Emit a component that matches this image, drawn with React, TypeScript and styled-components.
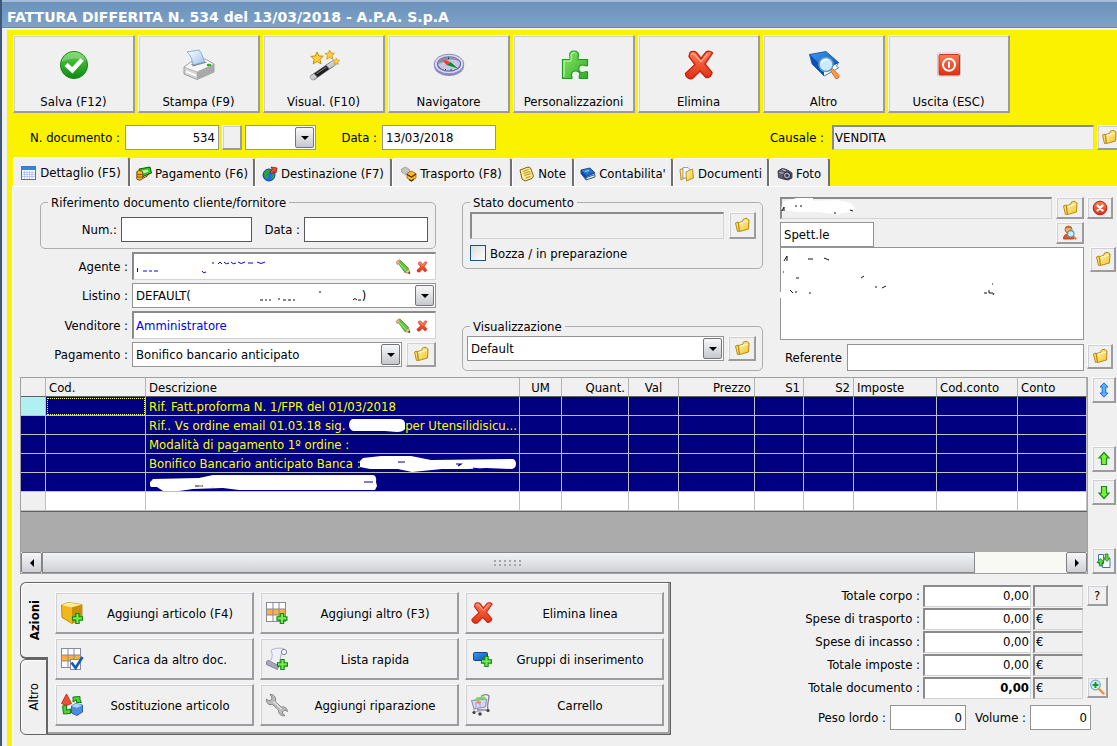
import React from 'react';
import styled, { createGlobalStyle, css } from 'styled-components';

const GlobalStyle = createGlobalStyle`
  *, *::before, *::after { box-sizing: border-box; }
  body { margin: 0; background: #f0f0f0; }
  body, button, input, select, textarea {
    font-family: 'DejaVu Sans Condensed', 'DejaVu Sans', sans-serif;
    font-size: 13px;
    line-height: 15px;
    color: #000;
  }
  svg { display: block; flex: none; }
`;

/* ---------- icons ---------- */

type IconProps = { size?: number };

const Svg = ({ size = 16, box = 16, children }: { size?: number; box?: number; children: React.ReactNode }) => (
  <svg width={size} height={size} viewBox={`0 0 ${box} ${box}`} aria-hidden="true">{children}</svg>
);

const GradientSheet = styled.svg`
  position: absolute;
`;
const Gradients = () => (
  <GradientSheet width="0" height="0" aria-hidden="true">
    <defs>
      <linearGradient id="green" x1="0" y1="0" x2="0" y2="1"><stop offset="0" stopColor="#5fd048" /><stop offset="1" stopColor="#0d8a14" /></linearGradient>
      <linearGradient id="lime" x1="0" y1="0" x2="1" y2="1"><stop offset="0" stopColor="#8be868" /><stop offset="1" stopColor="#2fae22" /></linearGradient>
      <linearGradient id="red" x1="0" y1="0" x2="0" y2="1"><stop offset="0" stopColor="#ff7a55" /><stop offset="1" stopColor="#e22e10" /></linearGradient>
      <linearGradient id="gold" x1="0" y1="0" x2="1" y2="1"><stop offset="0" stopColor="#fff6b0" /><stop offset="1" stopColor="#f2c428" /></linearGradient>
      <linearGradient id="blue" x1="0" y1="0" x2="1" y2="1"><stop offset="0" stopColor="#3f9cf0" /><stop offset="1" stopColor="#0a4cb4" /></linearGradient>
      <linearGradient id="steel" x1="0" y1="0" x2="1" y2="1"><stop offset="0" stopColor="#ffffff" /><stop offset="1" stopColor="#9a9aa8" /></linearGradient>
      <linearGradient id="paper" x1="0" y1="0" x2="1" y2="1"><stop offset="0" stopColor="#ffffff" /><stop offset="1" stopColor="#9cc4f0" /></linearGradient>
    </defs>
  </GradientSheet>
);

const Plus = ({ x, y, s = 1 }: { x: number; y: number; s?: number }) => (
  <path transform={`translate(${x} ${y}) scale(${s})`} d="M4 .5h3.500v3.500H11v3.500H7.500V11H4V7.500H.5V4H4z" fill="#7bea4f" stroke="#0d8a14" strokeWidth="1.200" />
);

const CheckIcon = () => (
  <Svg size={32} box={32}>
    <circle cx="16" cy="16" r="13.600" fill="url(#green)" stroke="#1a8a1a" />
    <path d="M3.500 13C5 6 11 3 16 3s11 3 12.500 9C22 9 12 9 3.500 13z" fill="#fff" opacity=".25" />
    <path d="M6.500 17l3.200-3 4.500 4 8.300-8.700 3.200 2.800L14.500 24.500z" fill="#fff" />
  </Svg>
);
const PrinterIcon = () => (
  <Svg size={32} box={32}>
    <path d="M1 18l7-5 14-3 9 5v8l-17 7.500L1 25z" fill="#d4d4d4" stroke="#8a8a8a" strokeWidth=".8" />
    <path d="M1 18l7-5 14-3 9 5-17 8z" fill="#f6f6f6" stroke="#9a9a9a" strokeWidth=".6" />
    <path d="M8 15l13-3 3 1.500-14 4z" fill="#8c8c8c" />
    <path d="M4 3l12-2c3 3 4 8 5.500 12L10 16C9 11 8 6 4 3z" fill="url(#paper)" stroke="#6d9fce" strokeWidth=".8" />
    <path d="M14 23L31 15.500v7.500l-17 7.500z" fill="#a9a9a9" />
    <path d="M3 21.500l10 4v2L3 23.500z" fill="#fff" />
    <ellipse cx="26" cy="16" rx="2.400" ry="1.300" fill="#2fae22" />
  </Svg>
);
const Star = ({ x, y, s }: { x: number; y: number; s: number }) => (
  <path transform={`translate(${x} ${y}) scale(${s})`} d="M5.500 0l1.600 3.600 4 .2-3 2.800 1 4.100-3.600-2.100L2 10.800l.8-4L0 4l3.900-.3z" fill="#ffd23a" stroke="#c88a08" strokeWidth=".9" />
);
const WandIcon = () => (
  <Svg size={32} box={32}>
    <path d="M3 26.500l19-13 3.500 3.700L6.500 30.500z" fill="#1c1c1c" stroke="#555" strokeWidth=".6" />
    <path d="M2.500 26.800l3.500-2.300 3.500 3.800-3.500 2.500c-2 1-5-2-3.500-4zM18 16.200l8-5.500 3.500 3.800-8 5.500z" fill="url(#steel)" stroke="#777" strokeWidth=".6" />
    <path d="M8 24.500l10-6.800.8.800L8.800 25.200z" fill="#777" />
    <Star x={3} y={3} s={1.100} /><Star x={17} y={1} s={0.850} /><Star x={25} y={9} s={0.600} />
  </Svg>
);
const CompassIcon = () => (
  <Svg size={32} box={32}>
    <ellipse cx="16" cy="17" rx="15" ry="10" fill="#8888c8" />
    <ellipse cx="16" cy="15" rx="14.800" ry="9.800" fill="#d8d8f4" stroke="#8080b8" strokeWidth=".9" />
    <ellipse cx="16" cy="15" rx="11.500" ry="7.200" fill="#c4c8e4" stroke="#6c6c98" strokeWidth="1.200" />
    <path d="M5 15c1-5 7-7 11-7 5 0 9 2 11 5-5-3-10-3-13-1-3 1-6 2-9 3z" fill="#8c90b0" />
    <path d="M9 10.500l8.500 2.500-4 3z" fill="#ff3a20" />
    <path d="M25 19.500l-7.500-6.500-4 3z" fill="#108828" />
    <path d="M15.500 8.500v1.500M13 20l-1 1M18 20v1.500" stroke="#333" />
  </Svg>
);
const PuzzleIcon = () => (
  <Svg size={32} box={32}>
    <path d="M4.500 10.500h7c1.500-1 .2-2.500.2-4.500C11.700 3 13.700 2 16 2s4.500 1.200 4.500 4c0 2-1.500 3.500 0 4.500h9v6c-1.500 1-3-.5-5-.5-2.600 0-3.700 1.500-3.700 3.700s1.500 3.800 3.700 3.800c2 0 3.500-1.500 5-.5v6.500h-8c-1-1.500.3-2.500.3-4 0-2.300-1.800-3.500-4.300-3.500S13.500 23.700 13.500 26c0 1.500 1.200 2 .2 3.500H4.500z" fill="url(#lime)" stroke="#1f9a20" strokeWidth="1.200" />
    <path d="M6 28V12h6.500c1.500-2 .5-4 .5-6 .2-2 2-2.700 4-2.500" fill="none" stroke="#c6f8b0" strokeWidth="1.100" />
  </Svg>
);
const CrossIcon = ({ size = 32 }: IconProps) => (
  <Svg size={size} box={32}>
    <path d="M7 3.500c1.500-1.500 5-1.500 6.500 0L18 9.500l5-6.500c2-1.500 5.500-.5 6.500 1l-7.500 11 7 8.500c.5 2.500-3 5.500-6 5L17 22l-7 7c-2 1.500-5.500.5-7-2l-.5-2.500L12 15.500 6 7.500z" fill="url(#red)" stroke="#c42410" strokeWidth="1.400" />
    <path d="M8 5.500c1.500-1 3-.8 4 .3l6 7 6.500-8" fill="none" stroke="#ffb49a" strokeWidth="1.200" />
  </Svg>
);
const BookSearchIcon = () => (
  <Svg size={32} box={32}>
    <path d="M1.500 5.500L4 15l12 12 14.500-8-2-2 2-3.500L16 21z" fill="#fff" stroke="#1560c0" strokeWidth=".8" />
    <path d="M1.500 5.500L18 2.500l12.500 11L16 20z" fill="url(#blue)" stroke="#0c48a0" strokeWidth=".8" />
    <path d="M1.500 5.500L4 15l12 12v-7z" fill="#0d50b8" />
    <circle cx="18" cy="15.500" r="7" fill="#c8ecfc" stroke="#5c9ccc" strokeWidth="1.600" />
    <path d="M13.500 14c1-3 4-4 7-3" fill="none" stroke="#fff" strokeWidth="1.600" />
    <path d="M22.500 21.500l2-2 6.500 7c.5 2-1.500 3.800-3.300 3z" fill="#ff9a40" stroke="#c45a10" strokeWidth=".8" />
  </Svg>
);
const PowerIcon = () => (
  <Svg size={32} box={32}>
    <rect x="4.500" y="4" width="23" height="23" rx="2" fill="#fff" stroke="#c8c8c8" />
    <rect x="6" y="5.500" width="20.500" height="20.500" rx="1" fill="url(#red)" stroke="#d03018" />
    <circle cx="16" cy="15.800" r="6" fill="none" stroke="#fff" strokeWidth="2" />
    <path d="M16 12.500v6.500" stroke="#fff" strokeWidth="2" />
  </Svg>
);

const TableIcon = () => (
  <Svg>
    <rect x=".5" y="1.500" width="14" height="13" fill="#fff" stroke="#3c78c8" />
    <path d="M1 2h13v3H1z" fill="#2f86e4" />
    <path d="M1 7.500h13M1 9.500h13M1 11.500h13M3.500 5.500V14M6 5.500V14M8.500 5.500V14M11 5.500V14" stroke="#a8b4dc" strokeWidth=".7" />
  </Svg>
);
const MoneyIcon = () => (
  <Svg>
    <path d="M3 3l11-2 1.500 6L6 11z" fill="#34c024" stroke="#0a5c10" />
    <path d="M6 4.500l6-1 .5 2.500L7 7.500z" fill="#b8f49c" />
    <path d="M.8 5.500c2-1.500 5-1 6 .5v6.500c-1 2-5 2-6 .5z" fill="#f4b420" stroke="#6a4400" strokeWidth=".9" />
    <path d="M1 8c2 1 4 1 5.500 0M1 10.500c2 1 4 1 5.500 0M6.500 12.500l5-2.500 1-3" fill="none" stroke="#7a4c00" />
  </Svg>
);
const GlobeIcon = () => (
  <Svg>
    <circle cx="7" cy="9" r="6" fill="#1f70d8" stroke="#0a3a80" strokeWidth=".9" />
    <path d="M2 7c1-3 4-4 6-3l-1 3-2 1 1 3-1 2C3 12 2 10 2 7zM9 9l3-1c1 2 0 4-2 5z" fill="#2ca82c" />
    <path d="M9 1l6 1-1 5-2-1.500L9.500 8 8 6l2.500-2.500z" fill="#f04828" stroke="#8c1c08" strokeWidth=".8" />
  </Svg>
);
const ParcelIcon = () => (
  <Svg>
    <path d="M.5 3l4-2 4 2.500V7L5 9 .5 6z" fill="#c4c4c4" stroke="#909090" strokeWidth=".7" />
    <path d="M6 7.500l4-2.500 5 2.500v4.500l-4.500 3L6 12z" fill="#f8b828" stroke="#a06808" strokeWidth=".8" />
    <path d="M6 8.500l4.500 2.500L15 8M8 13.500l2.500 1.500 2.500-2" fill="none" stroke="#4c3000" strokeWidth="1.200" />
  </Svg>
);
const NoteIcon = () => (
  <Svg>
    <path d="M1 4l8-3 2.500 1L14.500 10l-1.500 2.500L6 15l-3-2z" fill="#fce88c" stroke="#6c5410" strokeWidth=".9" />
    <path d="M4 5.500l5.500-2M4.500 7.500l6.500-2M5.500 9.500l6.500-2M6.500 12l5-1.500" stroke="#a8842c" strokeWidth=".9" />
  </Svg>
);
const LedgerIcon = () => (
  <Svg>
    <path d="M1 4l9-2 5 5-8.500 3.500z" fill="url(#blue)" stroke="#08346c" strokeWidth=".8" />
    <path d="M1 4v3.500L6 14l9-3V8.500l-8.500 3z" fill="#e8f0fc" stroke="#08346c" strokeWidth=".8" />
    <path d="M1 4v3.500L6.500 14v-3.500z" fill="#0c48a4" />
    <path d="M5 5.500l4-1" stroke="#b8dcff" />
  </Svg>
);
const DocumentsIcon = () => (
  <Svg>
    <path d="M1 3.500l3.500-1 1 9.500-3.500 2z" fill="url(#gold)" stroke="#a87c10" strokeWidth=".8" />
    <path d="M4 1.500h5l2 2V12H4z" fill="#f4f8ff" stroke="#7890b8" strokeWidth=".8" />
    <path d="M7 6l6.500-3 1 9L7.500 15z" fill="url(#gold)" stroke="#a87c10" strokeWidth=".8" />
  </Svg>
);
const CameraIcon = () => (
  <Svg>
    <path d="M1 5l4-2.500 3 .5 3.500 1.500L15 7v5l-4 2-5-1-4.500-1.500z" fill="#5c5c6c" stroke="#2c2c38" strokeWidth=".8" />
    <path d="M2.500 6.500l5 1M5 3.500l4 1.500" stroke="#c8c8d4" />
    <circle cx="10" cy="9.500" r="3.600" fill="#a8a8bc" stroke="#20202c" />
    <circle cx="10" cy="9.500" r="1.600" fill="#303850" />
  </Svg>
);
const FolderIcon = () => (
  <Svg>
    <path d="M1.500 6l2.500-1 1.500 9-2 .5z" fill="#fce070" stroke="#b88810" />
    <path d="M4.500 5.500L8.500 4.500l1-2.500 3.500-.8 1 1.500 1 .3-.5 9L5.500 14.500z" fill="url(#gold)" stroke="#b88810" />
    <path d="M5.500 6.500l8.500-2.500" stroke="#fffbe0" />
  </Svg>
);
const PencilIcon = () => (
  <Svg>
    <path d="M2 2.500l3-1.500 8.500 8.500-3.500 4z" fill="#5cc838" stroke="#3c8c20" strokeWidth=".8" />
    <path d="M2 5.500L1.500 3 4 1l1.500.500L3 5z" fill="#fcb8a8" stroke="#d06850" strokeWidth=".7" />
    <path d="M3.500 3.500l8 8.500" stroke="#a8f080" />
    <path d="M10 13.500l3.500-4 1.500 5z" fill="#f0cc90" stroke="#8c7040" strokeWidth=".7" />
    <path d="M13 14l2 1-.5-2.500z" fill="#333" />
  </Svg>
);
const CloseIcon = () => (
  <Svg>
    <circle cx="8" cy="8" r="6.800" fill="url(#red)" stroke="#b02010" />
    <path d="M5.500 5.500l5 5M10.500 5.500l-5 5" stroke="#fff" strokeWidth="2.400" strokeLinecap="round" />
  </Svg>
);
const UserSearchIcon = () => (
  <Svg>
    <path d="M1.500 14c0-4 2-5 5-5s5 2 5 5z" fill="#e45828" stroke="#a83408" strokeWidth=".8" />
    <circle cx="6.500" cy="4.500" r="3.500" fill="#f0b070" stroke="#a85c18" strokeWidth=".9" />
    <path d="M3 4c0-4 7-4 7 0-2-1.500-5-1.500-7 0z" fill="#c87020" />
    <circle cx="8.800" cy="8.800" r="3.200" fill="#c8ecfc" stroke="#4c90c8" strokeWidth="1.100" />
    <path d="M11.200 11.200l3 3" stroke="#f07818" strokeWidth="2" />
  </Svg>
);
const UpDownIcon = () => (
  <Svg><path d="M8 .8l4 4.200H9.800v6H12L8 15.200 4 11h2.200V5H4z" fill="#58b0f8" stroke="#1868c8" strokeWidth=".9" /></Svg>
);
const UpIcon = () => (
  <Svg><path d="M8 1.500l5 5.500h-2.500v6.500h-5V7H3z" fill="#7cf040" stroke="#188c18" strokeWidth="1.200" /></Svg>
);
const DownIcon = () => (
  <Svg><path d="M8 14.500L3 9h2.500V2.500h5V9H13z" fill="#7cf040" stroke="#188c18" strokeWidth="1.200" /></Svg>
);
const SwapDocIcon = () => (
  <Svg>
    <path d="M2.500 1.500h5v9h-5zM8.500 5.500h5.500v9H6.500v-2z" fill="#fff" stroke="#3c78a8" />
    <path d="M4.500 5.500L8 9.500H6V13H3.500V9.500H1zM9 1h3v4h2l-3 3.500L8 5h1.500z" fill="#5ce030" stroke="#128012" strokeWidth=".8" />
  </Svg>
);
const ZoomInIcon = () => (
  <Svg>
    <circle cx="6.500" cy="6" r="4.800" fill="#d8f4fc" stroke="#78a8c8" strokeWidth="1.200" />
    <path d="M6.500 3v6M3.500 6h6" stroke="#10982c" strokeWidth="2" />
    <path d="M10 10l4.500 4.500" stroke="#f09040" strokeWidth="2.400" strokeLinecap="round" />
  </Svg>
);

const BoxPlusIcon = () => (
  <Svg size={24} box={24}>
    <path d="M1.500 4L8 1.500l14 2V17l-10 5.500-10-6z" fill="#f0b818" stroke="#a87c08" strokeWidth=".8" />
    <path d="M1.500 4L8 1.500l14 2-10 3z" fill="#fcec90" />
    <path d="M12 6.500l10-3V17l-10 5.500z" fill="#c89008" />
    <Plus x={12} y={12} s={0.950} />
  </Svg>
);
const Sheet = () => (
  <>
    <rect x="1.500" y="1.500" width="19" height="19" fill="#fff" stroke="#888898" />
    <path d="M2 8h18v6H2z" fill="#fcb040" />
    <path d="M8 2v18M14 2v18M2 8h18M2 14h18" stroke="#888898" />
  </>
);
const SheetPlusIcon = () => <Svg size={24} box={24}><Sheet /><Plus x={11.500} y={12} s={0.950} /></Svg>;
const SheetCheckIcon = () => (
  <Svg size={24} box={24}>
    <Sheet />
    <rect x="10.500" y="12.500" width="10" height="10" fill="#fff" stroke="#889" />
    <path d="M11.500 15.500l4 5.500 7-11" fill="none" stroke="#1458c8" strokeWidth="2.600" />
  </Svg>
);
const ScrollPlusIcon = () => (
  <Svg size={24} box={24}>
    <path d="M6 3.500C8 1 17 .5 19.500 2v4.500l-3-.5-3 13-9-4c3-4 3.500-7 1.500-11.500z" fill="#f0f0fc" stroke="#a0a0bc" strokeWidth=".8" />
    <circle cx="19" cy="5" r="2.600" fill="#f8f8ff" stroke="#7c7c98" />
    <path d="M1.500 14.500c1-1.500 3-1 4 0L14 19l-1.500 3.500-11-5z" fill="#a8a8bc" stroke="#70708c" strokeWidth=".8" />
    <Plus x={12} y={12} s={0.950} />
  </Svg>
);
const ShapesIcon = () => (
  <Svg size={24} box={24}>
    <path d="M6.500 1l5 9.500-5 2-5-2z" fill="#f05038" stroke="#a82010" strokeWidth=".8" />
    <path d="M13 4l7-.5v3l1.500 3h-5V7L13 9zM2.500 13l4-1v5l4-1v4.500l-7 .5z" fill="#50d030" stroke="#128012" />
    <path d="M11.500 13l4-2.500 7 1.500v7L17 22.500 11.500 20z" fill="#4c8ce4" stroke="#164898" strokeWidth=".8" />
    <path d="M11.500 13l4-2.500 7 1.500-5.500 3z" fill="#b0d4fc" />
  </Svg>
);
const WrenchIcon = () => (
  <Svg size={24} box={24}>
    <path d="M5 1.500c3-.5 6 2 5.500 5.500l-.3 1.500 6 5.500c3-.8 6 1 6.300 4.500l-2.500-1.500-2.500 1.500.3 2.500 2.200 1.500c-3.500 1-7-1.500-6.500-5.500L7.500 11.500C4 12.500 1 10 1.300 6L4 8l2.500-1.500L7 4z" fill="#bcbcbc" stroke="#848484" />
    <path d="M8.500 8.500l8 7.500" stroke="#e4e4e4" strokeWidth="1.400" />
  </Svg>
);
const CardPlusIcon = () => (
  <Svg size={24} box={24}>
    <rect x="3.500" y="5.500" width="14" height="8" rx="1" fill="url(#blue)" stroke="#0c4498" />
    <Plus x={11} y={9} s={0.950} />
  </Svg>
);
const CartIcon = () => (
  <Svg size={24} box={24}>
    <path d="M11 3.500c3-3 8-2 8 0L17.500 13 18 17H7" fill="none" stroke="#888898" strokeWidth="1.400" />
    <path d="M1.500 7.500L16.500 6l-1 8L4 16z" fill="#d8d4f4" stroke="#8c88b0" />
    <path d="M4 7.300l3-3 8-.8 1 2.500z" fill="#78dc58" />
    <path d="M5 9.500l3-2 3 1-1 3z" fill="#f88c58" />
    <path d="M4 16v3l12-2M6 9v6M10 8v6" fill="none" stroke="#a8a4c8" />
    <circle cx="4" cy="19.500" r="1.600" fill="#444" /><circle cx="10" cy="21" r="1.800" fill="#444" /><circle cx="18" cy="17.500" r="1.600" fill="#444" />
  </Svg>
);

/* ---------- shared controls ---------- */

const raised = css`
  background: #f0f0f0;
  border: 1px solid;
  border-width: 1px 2px 2px 1px;
  border-color: #fafafa #9c9ca0 #9c9ca0 #fafafa;
  box-shadow: inset 1px 1px 0 #cfcfd6;
`;

const TextInput = styled.input<{ $w?: number; $right?: boolean; $bold?: boolean; $dark?: boolean; $h?: number }>`
  ${p => (p.$w ? `width: ${p.$w}px;` : 'flex: 1; min-width: 0;')}
  height: ${p => p.$h ?? 25}px;
  padding: 0 3px;
  border: 1px solid ${p => (p.$dark ? '#55585c' : '#949494')};
  border-radius: 0;
  background: #fff;
  text-align: ${p => (p.$right ? 'right' : 'left')};
  font-weight: ${p => (p.$bold ? 'bold' : 'normal')};
`;

const SunkenInput = styled(TextInput)<{ $gray?: boolean }>`
  border: 2px solid;
  border-width: 2px 1px 1px 2px;
  border-color: #8a8a8a #d4d4d8 #d4d4d8 #8a8a8a;
  padding: 0 1px 2px;
  background: ${p => (p.$gray ? '#f0f0f0' : '#fff')};
`;

const IconButton = styled.button<{ $w?: number; $h?: number }>`
  ${raised}
  flex: none;
  width: ${p => p.$w ?? 28}px;
  height: ${p => p.$h ?? 25}px;
  padding: 0;
  display: flex;
  align-items: center;
  justify-content: center;
`;

const SelectBox = styled.span<{ $w?: number }>`
  position: relative;
  display: flex;
  ${p => (p.$w ? `width: ${p.$w}px;` : 'flex: 1;')}
  height: 25px;
  border: 1px solid #949494;
  background: #fff;
`;
const NativeSelect = styled.select`
  appearance: none;
  flex: 1;
  min-width: 0;
  border: 0;
  padding: 0 22px 0 3px;
  background: transparent;
`;
const DropMark = styled.span`
  position: absolute;
  top: 1px;
  right: 1px;
  width: 19px;
  height: 21px;
  display: flex;
  align-items: center;
  justify-content: center;
  pointer-events: none;
  border: 1px solid #74747c;
  border-radius: 2px;
  background: linear-gradient(#f8f8fa, #c6c8ce);
`;
const Select = ({ id, label, width, options, children }: { id?: string; label?: string; width?: number; options: string[]; children?: React.ReactNode }) => (
  <SelectBox $w={width}>
    <NativeSelect id={id} aria-label={label}>{options.map(o => <option key={o}>{o}</option>)}</NativeSelect>
    {children}
    <DropMark><svg width="8" height="4" viewBox="0 0 8 4"><path d="M0 0h8L4 4z" /></svg></DropMark>
  </SelectBox>
);

const Row = styled.div<{ $gap?: number }>`
  display: flex;
  align-items: center;
  gap: ${p => p.$gap ?? 4}px;
`;

/* ---------- window frame ---------- */

const Window = styled.main`
  border-left: 2px solid #3d5878;
  background: #f0f0f0;
  min-height: 100vh;
  overflow: hidden;
  display: flex;
  flex-direction: column;
`;
const TitleBar = styled.h1`
  margin: 0;
  height: 28px;
  padding: 7px 5px 0;
  border-top: 2px solid #a4bcd8;
  border-bottom: 1px solid #6488b4;
  background: linear-gradient(#6c92bb, #7ea2c8);
  color: #fff;
  font-family: 'DejaVu Sans', sans-serif;
  font-size: 14px;
  line-height: 17px;
  white-space: nowrap;
`;
const Frame = styled.div`
  flex: 1;
  margin: 2px 0 0 5px;
  border-left: 5px solid #fbf200;
  display: flex;
  flex-direction: column;
`;
const Header = styled.header`
  background: #fbf200;
  padding: 5px 0 0 1px;
`;
const Toolbar = styled.div`
  display: flex;
  gap: 3px;
`;
const ToolButton = styled.button`
  ${raised}
  width: 122px;
  height: 78px;
  padding: 13px 0 2px;
  display: flex;
  flex-direction: column;
  align-items: center;
  justify-content: space-between;
`;
const DocumentBar = styled.div`
  display: flex;
  align-items: center;
  padding: 12px 0 7px;
`;
const BarLabel = styled.label<{ $w: number }>`
  width: ${p => p.$w}px;
  padding-right: 5px;
  text-align: right;
`;
const BarGroup = styled.div<{ $grow?: boolean }>`
  display: flex;
  align-items: center;
  gap: 3px;
  ${p => p.$grow && 'flex: 1; margin: 0 -4px 0 270px;'}
`;
const TabStrip = styled.div`
  display: flex;
  align-items: flex-end;
  height: 29px;
`;
const Tab = styled.button<{ $w: number; $active?: boolean }>`
  width: ${p => p.$w}px;
  height: ${p => (p.$active ? 30 : 28)}px;
  margin-bottom: ${p => (p.$active ? -1 : 0)}px;
  padding: ${p => (p.$active ? 0 : 2)}px 0 0;
  display: flex;
  align-items: center;
  justify-content: center;
  gap: 3px;
  white-space: nowrap;
  background: #f0f0f0;
  border: solid;
  border-width: 1px 2px 0 1px;
  border-color: #fff #707070 #fff #fff;
  border-radius: 3px 3px 0 0;
`;
const Content = styled.div`
  flex: 1;
  border-top: 1px solid #fff;
  border-left: 1px solid #fff;
  background: #f0f0f0;
  padding: 8px 1px 0 7px;
`;

/* ---------- form ---------- */

const Form = styled.form`
  display: flex;
  padding-bottom: 6px;
`;
const LeftColumn = styled.div`
  width: 416px;
  margin-right: 26px;
  display: flex;
  flex-direction: column;
  gap: 3px;
`;
const MiddleColumn = styled.div`
  width: 301px;
  margin-right: 17px;
  display: flex;
  flex-direction: column;
  justify-content: space-between;
`;
const RightColumn = styled.div`
  flex: 1;
  padding-top: 2px;
  display: grid;
  grid-template-columns: 1fr 29px;
  column-gap: 3px;
  align-content: start;
`;
const Group = styled.fieldset<{ $indent?: number; $pad: string }>`
  margin: 0 0 0 ${p => p.$indent ?? 0}px;
  padding: ${p => p.$pad};
  min-width: 0;
  border: 1px solid #adadad;
  border-radius: 5px;
`;
const GroupTitle = styled.legend<{ $inset?: boolean }>`
  margin-left: ${p => (p.$inset ? 3 : 0)}px;
  padding: 0 3px;
`;
const FieldLabel = styled.label<{ $w: number }>`
  width: ${p => p.$w}px;
  flex: none;
  text-align: right;
  white-space: nowrap;
`;
const LinkField = styled.div`
  position: relative;
  flex: 1;
  height: 28px;
  display: flex;
  align-items: center;
  gap: 5px;
  padding: 0 7px 0 0;
  background: #fff;
  border: solid;
  border-width: 2px 1px 1px 2px;
  border-color: #8a8a8a #d4d4d8 #d4d4d8 #8a8a8a;
`;
const LinkInput = styled.input`
  flex: 1;
  min-width: 0;
  border: 0;
  padding: 0 2px;
  background: transparent;
  color: #0000f0;
`;
const BareButton = styled.button`
  padding: 0;
  border: 0;
  background: none;
`;
const CheckLabel = styled.label`
  display: flex;
  align-items: center;
  gap: 4px;
  margin-top: 6px;
`;
const Checkbox = styled.input`
  appearance: none;
  margin: 0;
  width: 16px;
  height: 16px;
  border: 1px solid #1c5180;
  background: linear-gradient(135deg, #dcdcd7, #fff);
`;
const CustomerField = styled.div`
  position: relative;
  flex: 1;
  display: flex;
`;
const Smudge = styled.svg<{ $x: number; $y: number }>`
  position: absolute;
  left: ${p => p.$x}px;
  top: ${p => p.$y}px;
  pointer-events: none;
`;
const AddressArea = styled.textarea`
  display: block;
  width: 100%;
  height: 93px;
  resize: none;
  padding: 3px;
  border: 1px solid #949494;
  border-radius: 0;
  background: #fff;
`;
const SalutationRow = styled.div`
  display: flex;
  justify-content: space-between;
  padding-top: 3px;
`;
const SideSlot = styled.div`
  padding-left: 3px;
`;
const ReferenceRow = styled.div<{ $plain?: boolean }>`
  display: flex;
  align-items: ${p => (p.$plain ? 'flex-start' : 'center')};
  gap: 5px;
  padding: 4px 0 0 ${p => (p.$plain ? 0 : 5)}px;
`;
const Spacer = styled.span`
  flex: 1;
`;

/* ---------- lines grid ---------- */

const LinesArea = styled.section`
  display: flex;
  gap: 4px;
`;
const GridFrame = styled.div`
  flex: 1;
  min-width: 0;
  border: 1px solid #a0a0a0;
  background: #ababab;
`;
const Lines = styled.table`
  width: 100%;
  table-layout: fixed;
  border-collapse: separate;
  border-spacing: 0;
  border-bottom: 1px solid #606060;
  margin-bottom: 40px;
`;
const HeadCell = styled.th<{ $align?: string }>`
  height: 19px;
  padding: 1px 3px 0;
  font-weight: normal;
  text-align: ${p => p.$align ?? 'left'};
  background: #f0f0f0;
  border-right: 1px solid #b4b4b4;
  border-bottom: 1px solid #606060;
`;
const Cell = styled.td<{ $kind: 'selected' | 'blank' | 'marker' | 'head' | 'focus' }>`
  height: 19px;
  padding: 0 0 0 3px;
  overflow: hidden;
  white-space: nowrap;
  color: #ff0;
  background: ${p => ({ selected: '#000080', focus: '#000080', blank: '#fff', marker: '#b0f0f0', head: '#f0f0f0' })[p.$kind]};
  border-right: 1px solid #c0c0c0;
  border-bottom: 1px solid #c0c0c0;
  ${p => p.$kind === 'focus' && 'outline: 1px dotted #ffff80; outline-offset: -2px;'}
`;
const LineText = styled.div`
  display: flex;
  align-items: center;
  height: 18px;
  white-space: pre;
`;
const Blot = styled.svg`
  margin-left: -8px;
`;
const ScrollBar = styled.div`
  display: flex;
  height: 21px;
  background: #f8f8f4;
`;
const ScrollButton = styled.button`
  width: 21px;
  padding: 0;
  display: flex;
  align-items: center;
  justify-content: center;
  border: 1px solid #808084;
  border-radius: 2px;
  background: linear-gradient(#f6f6f8, #cfd0d4);
`;
const ScrollThumb = styled.div`
  flex: 934;
  display: flex;
  align-items: center;
  justify-content: center;
  border: 1px solid #88888c;
  background: linear-gradient(#f2f3f5, #d0d1d6);
`;
const ScrollTrack = styled.div`
  flex: 91;
`;
const SideButtons = styled.div`
  width: 24px;
  display: flex;
  flex-direction: column;
  gap: 7px;
`;

/* ---------- footer ---------- */

const Footer = styled.section`
  display: flex;
  align-items: flex-start;
  justify-content: space-between;
  padding-top: 8px;
`;
const ActionsPanel = styled.div`
  display: flex;
`;
const SideTabs = styled.div`
  width: 27px;
  display: flex;
  flex-direction: column;
  z-index: 1;
`;
const SideTab = styled.button<{ $active?: boolean }>`
  flex: 1;
  width: ${p => (p.$active ? 28 : 27)}px;
  padding: 0;
  display: flex;
  align-items: center;
  justify-content: center;
  background: #f0f0f0;
  border: 1px solid #646464;
  border-right-width: ${p => (p.$active ? 0 : 1)}px;
  border-bottom-width: ${p => (p.$active ? 2 : 1)}px;
  border-radius: 6px 0 0 6px;
  box-shadow: inset 1px 1px 0 #fff;
  font-weight: ${p => (p.$active ? 'bold' : 'normal')};
`;
const Vertical = styled.span`
  writing-mode: vertical-rl;
  transform: rotate(180deg);
`;
const ActionGrid = styled.div`
  display: grid;
  grid-template-columns: repeat(3, 199px);
  grid-auto-rows: 42px;
  gap: 4px 6px;
  padding: 9px 6px 8px 7px;
  border: 1px solid #646464;
  box-shadow: inset -2px -2px 0 #a0a0a0, inset 0 1px 0 #fff;
`;
const ActionButton = styled.button`
  ${raised}
  display: flex;
  align-items: center;
  padding: 0 0 0 4px;
`;
const ActionText = styled.span`
  flex: 1;
  padding: 2px 0 0 4px;
`;
const Totals = styled.div`
  display: flex;
  flex-direction: column;
  padding: 3px 8px 0 0;
`;
const TotalRow = styled.div`
  display: grid;
  grid-template-columns: 134px 108px 50px 23px;
  column-gap: 2px;
  height: 23px;
  > button { justify-self: end; }
`;
const TotalLabel = styled.label`
  padding-right: 1px;
  text-align: right;
  line-height: 21px;
  white-space: nowrap;
`;
const WeightRow = styled.div`
  display: flex;
  align-items: center;
  gap: 4px;
  padding: 5px 17px 0 0;
  justify-content: flex-end;
`;

/* ---------- data ---------- */

const tools: [string, React.ReactNode][] = [
  ['Salva (F12)', <CheckIcon />], ['Stampa (F9)', <PrinterIcon />], ['Visual. (F10)', <WandIcon />],
  ['Navigatore', <CompassIcon />], ['Personalizzazioni', <PuzzleIcon />], ['Elimina', <CrossIcon />],
  ['Altro', <BookSearchIcon />], ['Uscita (ESC)', <PowerIcon />],
];
const tabs: [string, number, React.ReactNode][] = [
  ['Dettaglio (F5)', 117, <TableIcon />], ['Pagamento (F6)', 125, <MoneyIcon />], ['Destinazione (F7)', 137, <GlobeIcon />],
  ['Trasporto (F8)', 120, <ParcelIcon />], ['Note', 62, <NoteIcon />], ['Contabilita\'', 99, <LedgerIcon />],
  ['Documenti', 96, <DocumentsIcon />], ['Foto', 61, <CameraIcon />],
];
const columns: [string, number | undefined, string?][] = [
  ['', 25], ['Cod.', 100], ['Descrizione', undefined], ['UM', 42, 'center'], ['Quant.', 67, 'right'], ['Val', 50, 'center'],
  ['Prezzo', 76, 'right'], ['S1', 49, 'right'], ['S2', 50, 'right'], ['Imposte', 83], ['Cod.conto', 81], ['Conto', 69],
];
const lines: React.ReactNode[] = [
  'Rif. Fatt.proforma N. 1/FPR del 01/03/2018',
  <>{'Rif.. Vs ordine email 01.03.18 sig. '}<svg width="56" height="15" viewBox="0 0 56 15"><path d="M3 1h47q6 0 6 5v5q-2 3-8 3l-12-1H4q-4-2-4-6t3-6z" fill="#fff" /></svg>per Utensilidisicu...</>,
  'Modalità di pagamento 1º ordine :',
  <>{'Bonifico Bancario anticipato Banca : I'}<Blot width="156" height="17" viewBox="0 0 156 17"><path d="M3 3l18-2h30l20 4 82-1q3 1 3 5t-4 5l-26-1-18 1H82l-30 3-14-3H10L0 12V6z" fill="#fff" /><path d="M38 7h7M96 9h5l-3 2M113 13l6 1" stroke="#000080" strokeWidth="1.200" fill="none" /></Blot></>,
  <svg width="228" height="17" viewBox="0 0 228 17"><path d="M4 5l46-1 14-3h160q4 1 3 7l1 4-2 4H90l-16-2-30 1-14 2H14L8 13H2q-3-4 2-8z" fill="#fff" /><path d="M46 12h8M215 8h9" stroke="#000080" /><path d="M50 12h3M62 13h3" stroke="#ff0" /></svg>,
];
const actions: [string, React.ReactNode][] = [
  ['Aggiungi articolo (F4)', <BoxPlusIcon />], ['Aggiungi altro (F3)', <SheetPlusIcon />], ['Elimina linea', <CrossIcon size={24} />],
  ['Carica da altro doc.', <SheetCheckIcon />], ['Lista rapida', <ScrollPlusIcon />], ['Gruppi di inserimento', <CardPlusIcon />],
  ['Sostituzione articolo', <ShapesIcon />], ['Aggiungi riparazione', <WrenchIcon />], ['Carrello', <CartIcon />],
];
const totals = [
  { id: 'corpo', label: 'Totale corpo :', unit: '' },
  { id: 'trasporto', label: 'Spese di trasporto :', unit: '€' },
  { id: 'incasso', label: 'Spese di incasso :', unit: '€' },
  { id: 'imposte', label: 'Totale imposte :', unit: '€' },
  { id: 'documento', label: 'Totale documento :', unit: '€' },
];

/* ---------- page ---------- */

export default function App() {
  return (
    <Window>
      <GlobalStyle />
      <Gradients />
      <TitleBar>FATTURA DIFFERITA N. 534 del 13/03/2018 - A.P.A. S.p.A</TitleBar>
      <Frame>
        <Header>
          <Toolbar>
            {tools.map(([name, icon]) => <ToolButton key={name}>{icon}<span>{name}</span></ToolButton>)}
          </Toolbar>
          <DocumentBar>
            <BarLabel $w={112} htmlFor="numero">N. documento :</BarLabel>
            <BarGroup>
              <TextInput id="numero" $w={94} $right defaultValue="534" />
              <IconButton $w={20} aria-label="Numero" />
              <Select width={71} label="Serie" options={['']} />
            </BarGroup>
            <BarLabel $w={66} htmlFor="data">Data :</BarLabel>
            <TextInput id="data" $w={114} defaultValue="13/03/2018" />
            <BarGroup $grow>
              <BarLabel $w={63} htmlFor="causale">Causale :</BarLabel>
              <SunkenInput id="causale" $gray readOnly defaultValue="VENDITA" />
              <IconButton $w={24} aria-label="Scegli causale"><FolderIcon /></IconButton>
            </BarGroup>
          </DocumentBar>
          <TabStrip role="tablist">
            {tabs.map(([name, w, icon], i) => (
              <Tab key={name} role="tab" aria-selected={i === 0} $w={w} $active={i === 0}>{icon}{name}</Tab>
            ))}
          </TabStrip>
        </Header>

        <Content>
          <Form>
            <LeftColumn>
              <Group $indent={20} $pad="7px 7px 6px">
                <GroupTitle>Riferimento documento cliente/fornitore</GroupTitle>
                <Row>
                  <FieldLabel $w={69} htmlFor="rif-num">Num.:</FieldLabel>
                  <TextInput id="rif-num" $w={131} $dark />
                  <FieldLabel $w={44} htmlFor="rif-data">Data :</FieldLabel>
                  <TextInput id="rif-data" $dark />
                </Row>
              </Group>
              <Row>
                <FieldLabel $w={108} htmlFor="agente">Agente :</FieldLabel>
                <LinkField>
                  <LinkInput id="agente" />
                  <Smudge $x={2} $y={7} width="130" height="14" viewBox="0 0 130 14">
                    <path d="M1.500 7v4M7 10h4M13 10h3M18 10h4M66 10q1 3 4 1M77 1v2M82 3l2-2 2 2M88 1q2 3 5 1M95 1q2 3 5 1M102 1q3 3 7 0M112 2h5M121 1q4 3 8 0" fill="none" stroke="#0000f0" />
                  </Smudge>
                  <BareButton type="button" aria-label="Modifica agente"><PencilIcon /></BareButton>
                  <BareButton type="button" aria-label="Rimuovi agente"><CrossIcon size={12} /></BareButton>
                </LinkField>
              </Row>
              <Row>
                <FieldLabel $w={108} htmlFor="listino">Listino :</FieldLabel>
                <Select id="listino" options={['DEFAULT(' + '\u00a0'.repeat(46) + ')']}>
                  <Smudge $x={126} $y={6} width="104" height="14" viewBox="0 0 104 14">
                    <path d="M1 10h3M6 10h2M10 10h2M20 8v2M24 10h3M29 10h3M34 10h2M60 2h2M94 10q2-3 4 0M99 10h3" fill="none" stroke="#111" />
                  </Smudge>
                </Select>
              </Row>
              <Row>
                <FieldLabel $w={108} htmlFor="venditore">Venditore :</FieldLabel>
                <LinkField>
                  <LinkInput id="venditore" defaultValue="Amministratore" />
                  <BareButton type="button" aria-label="Modifica venditore"><PencilIcon /></BareButton>
                  <BareButton type="button" aria-label="Rimuovi venditore"><CrossIcon size={12} /></BareButton>
                </LinkField>
              </Row>
              <Row>
                <FieldLabel $w={108} htmlFor="pagamento">Pagamento :</FieldLabel>
                <Select id="pagamento" options={['Bonifico bancario anticipato']} />
                <IconButton type="button" $w={30} aria-label="Scegli pagamento"><FolderIcon /></IconButton>
              </Row>
            </LeftColumn>

            <MiddleColumn>
              <Group $pad="2px 6px 7px 7px">
                <GroupTitle>Stato documento</GroupTitle>
                <Row $gap={5}>
                  <SunkenInput aria-label="Stato documento" $gray $h={27} readOnly />
                  <IconButton type="button" $w={27} $h={27} aria-label="Scegli stato"><FolderIcon /></IconButton>
                </Row>
                <CheckLabel><Checkbox type="checkbox" />Bozza / in preparazione</CheckLabel>
              </Group>
              <Group $pad="2px 6px 9px 4px">
                <GroupTitle $inset>Visualizzazione</GroupTitle>
                <Row>
                  <Select label="Visualizzazione" options={['Default']} />
                  <IconButton type="button" aria-label="Scegli visualizzazione"><FolderIcon /></IconButton>
                </Row>
              </Group>
            </MiddleColumn>

            <RightColumn>
              <Row>
                <CustomerField>
                  <SunkenInput aria-label="Cliente" $gray $h={22} readOnly />
                  <Smudge $x={1} $y={0} width="78" height="20" viewBox="0 0 78 20">
                    <path d="M8 3l8-2h16v3l24-1 14 3 4 5-2 4-18 2-18-2H14L6 13l-6-1 2-7z" fill="#fff" />
                    <path d="M1 14l2-4v4M14 9h2M19 9h2M53 16h2M69 13l3 1" stroke="#111" fill="none" />
                  </Smudge>
                </CustomerField>
                <IconButton type="button" $h={22} aria-label="Scegli cliente"><FolderIcon /></IconButton>
              </Row>
              <IconButton type="button" $w={26} $h={22} aria-label="Rimuovi cliente"><CloseIcon /></IconButton>

              <SalutationRow>
                <TextInput aria-label="Intestazione" $w={94} defaultValue="Spett.le" />
                <IconButton type="button" $h={22} aria-label="Cerca contatto"><UserSearchIcon /></IconButton>
              </SalutationRow>
              <span />

              <CustomerField>
                <AddressArea aria-label="Indirizzo" />
                <Smudge $x={0} $y={5} width="220" height="46" viewBox="0 0 220 46">
                  <path d="M0 40h12v7H0z" fill="#fff" />
                  <path d="M4 9l3-5v5M28 7h5M44 6l5 2M3 20h1M16 26h3M81 26l3-2M95 35h2M102 36l4-2M10 38l3 3M15 40h2M29 41h2M204 41h3M209 38v3h4M212 32h1M213 43l1-2" stroke="#111" fill="none" />
                </Smudge>
              </CustomerField>
              <SideSlot><IconButton type="button" $w={26} aria-label="Scegli indirizzo"><FolderIcon /></IconButton></SideSlot>

              <ReferenceRow>
                <label htmlFor="referente">Referente</label>
                <TextInput id="referente" $h={27} />
              </ReferenceRow>
              <ReferenceRow $plain><IconButton type="button" $w={26} aria-label="Scegli referente"><FolderIcon /></IconButton></ReferenceRow>
            </RightColumn>
          </Form>

          <LinesArea>
            <GridFrame>
              <Lines>
                <colgroup>{columns.map(([n, w]) => <col key={n} width={w} />)}</colgroup>
                <thead>
                  <tr>{columns.map(([n, , a]) => <HeadCell key={n} $align={a}>{n}</HeadCell>)}</tr>
                </thead>
                <tbody>
                  {lines.map((text, r) => (
                    <tr key={r}>
                      {columns.map(([n], c) => (
                        <Cell key={n} $kind={r === 0 && c === 0 ? 'marker' : r === 0 && c === 1 ? 'focus' : 'selected'}>
                          {c === 2 && <LineText>{text}</LineText>}
                        </Cell>
                      ))}
                    </tr>
                  ))}
                  <tr>{columns.map(([n], c) => <Cell key={n} $kind={c === 0 ? 'head' : 'blank'} />)}</tr>
                </tbody>
              </Lines>
              <ScrollBar>
                <ScrollButton aria-label="Scorri a sinistra"><svg width="4" height="8" viewBox="0 0 4 8"><path d="M4 0v8L0 4z" /></svg></ScrollButton>
                <ScrollThumb>
                  <svg width="29" height="8" viewBox="0 0 29 8"><path d="M0 2h29M0 6h29" stroke="#a4a4aa" strokeWidth="2" strokeDasharray="2 3" /></svg>
                </ScrollThumb>
                <ScrollTrack />
                <ScrollButton aria-label="Scorri a destra"><svg width="4" height="8" viewBox="0 0 4 8"><path d="M0 0v8l4-4z" /></svg></ScrollButton>
              </ScrollBar>
            </GridFrame>
            <SideButtons>
              <IconButton $w={24} $h={26} aria-label="Altezza righe"><UpDownIcon /></IconButton>
              <Spacer />
              <IconButton $w={24} $h={26} aria-label="Sposta su"><UpIcon /></IconButton>
              <IconButton $w={24} $h={26} aria-label="Sposta giù"><DownIcon /></IconButton>
              <Spacer />
              <IconButton $w={24} $h={26} aria-label="Converti"><SwapDocIcon /></IconButton>
            </SideButtons>
          </LinesArea>

          <Footer>
            <ActionsPanel>
              <SideTabs role="tablist">
                <SideTab role="tab" $active aria-selected><Vertical>Azioni</Vertical></SideTab>
                <SideTab role="tab"><Vertical>Altro</Vertical></SideTab>
              </SideTabs>
              <ActionGrid>
                {actions.map(([name, icon]) => <ActionButton key={name}>{icon}<ActionText>{name}</ActionText></ActionButton>)}
              </ActionGrid>
            </ActionsPanel>
            <Totals>
              {totals.map(({ id, label, unit }) => (
                <TotalRow key={id}>
                  <TotalLabel htmlFor={id}>{label}</TotalLabel>
                  <SunkenInput id={id} $w={108} $h={22} $right $bold={id === 'documento'} defaultValue="0,00" />
                  <SunkenInput aria-label={`Valuta ${label}`} $w={50} $h={22} $gray readOnly defaultValue={unit} />
                  {id === 'corpo' && <IconButton $w={21} $h={21} aria-label="Aiuto">?</IconButton>}
                  {id === 'documento' && <IconButton $w={21} $h={21} aria-label="Dettaglio totale"><ZoomInIcon /></IconButton>}
                </TotalRow>
              ))}
              <WeightRow>
                <FieldLabel $w={70} htmlFor="peso">Peso lordo :</FieldLabel>
                <TextInput id="peso" $w={76} $right defaultValue="0" />
                <FieldLabel $w={56} htmlFor="volume">Volume :</FieldLabel>
                <TextInput id="volume" $w={61} $right defaultValue="0" />
              </WeightRow>
            </Totals>
          </Footer>
        </Content>
      </Frame>
    </Window>
  );
}
